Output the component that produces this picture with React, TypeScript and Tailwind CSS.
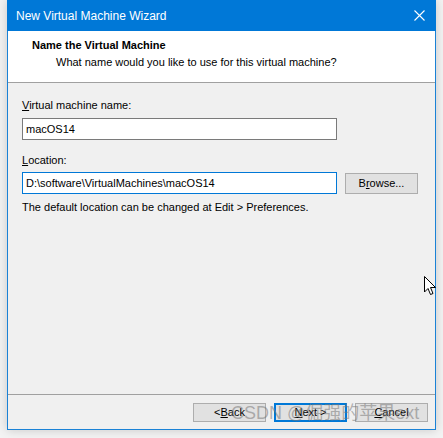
import React from 'react';

const font = { fontFamily: '"Liberation Sans", "Noto Sans CJK SC", sans-serif' };

function Button({ label, hot, primary }: { label: string; hot: number; primary?: boolean }) {
  return (
    <button
      type="button"
      className={`flex h-[19px] w-[73px] items-center justify-center bg-[#e1e1e1] text-[11px] text-black ${
        primary ? 'border-2 border-[#0078d7]' : 'border border-[#adadad]'
      }`}
    >
      {label.slice(0, hot)}
      <span className="underline">{label[hot]}</span>
      {label.slice(hot + 1)}
    </button>
  );
}

export default function App() {
  return (
    <div className="relative h-[438px] w-[443px] overflow-hidden bg-[#f3f3f3]" style={font}>
      <div className="ml-[7px] flex h-[430px] w-[429px] flex-col border-x border-b border-[#1a82d6] bg-[#f0f0f0] shadow-[0_0_10px_rgba(0,0,0,0.18)]">
        <div className="-mx-px flex h-[31px] shrink-0 items-center justify-between bg-[#0078d7] pl-[9px] pr-[10px] text-[12px] text-white">
          <span>New Virtual Machine Wizard</span>
          <svg width="11" height="11" viewBox="0 0 11 11" className="mr-[1px]">
            <path d="M0.5 0.5 L10.5 10.5 M10.5 0.5 L0.5 10.5" stroke="white" strokeWidth="1.1" />
          </svg>
        </div>
        <div className="h-[52px] shrink-0 border-b border-[#a0a0a0] bg-white pl-[24px] pt-[6px]">
          <div className="text-[11px] font-bold leading-[17px] text-black">Name the Virtual Machine</div>
          <div className="pl-[24px] text-[11px] leading-[17px] text-black">
            What name would you like to use for this virtual machine?
          </div>
        </div>
        <div className="flex flex-1 flex-col px-[14px] pt-[14px]">
          <label className="text-[11px] leading-[17px] text-black">
            <span className="underline">V</span>irtual machine name:
          </label>
          <div className="mt-[4px] flex h-[22px] w-[315px] items-center border border-[#7a7a7a] bg-white px-[3px] text-[11px] text-black">
            macOS14
          </div>
          <label className="mt-[12px] text-[11px] leading-[17px] text-black">
            <span className="underline">L</span>ocation:
          </label>
          <div className="mt-[3px] flex items-center gap-[8px]">
            <div className="flex h-[22px] w-[315px] items-center border border-[#0078d7] bg-white px-[3px] text-[11px] text-black">
              D:\software\VirtualMachines\macOS14
            </div>
            <button
              type="button"
              className="flex h-[21px] w-[73px] items-center justify-center border border-[#adadad] bg-[#e1e1e1] text-[11px] text-black"
            >
              B<span className="underline">r</span>owse...
            </button>
          </div>
          <div className="mt-[5px] text-[11px] leading-[17px] text-black">
            The default location can be changed at Edit &gt; Preferences.
          </div>
        </div>
        <div className="border-t border-[#a0a0a0]" />
        <div className="flex h-[34px] shrink-0 items-start justify-end gap-[8px] pr-[7px] pt-[8px]">
          <Button label="< Back" hot={2} />
          <Button label="Next >" hot={0} primary />
          <Button label="Cancel" hot={0} />
        </div>
      </div>

      <div
        className="pointer-events-none absolute left-[231px] top-[400px] whitespace-nowrap text-[18px] leading-[26px] text-[rgba(120,120,120,0.55)]"
        style={{ fontFamily: '"Liberation Sans", "Noto Sans CJK SC", sans-serif' }}
      >
        CSDN @倔强的苹果ext
      </div>

      <svg className="absolute left-[424px] top-[276px]" width="12" height="20" viewBox="0 0 12 20">
        <path
          d="M0.5 0.5 L0.5 16 L4 12.5 L6.5 18.5 L9 17.5 L6.5 11.5 L11.5 11.5 Z"
          fill="white"
          stroke="black"
          strokeWidth="1"
          strokeLinejoin="miter"
        />
      </svg>
    </div>
  );
}
